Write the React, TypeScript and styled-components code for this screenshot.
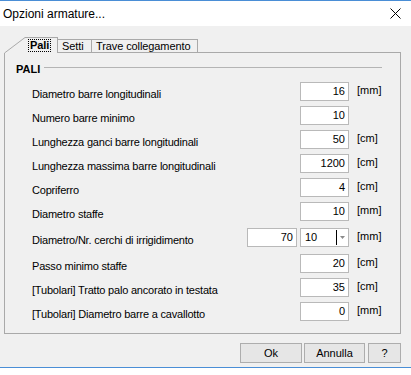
import React from 'react'
import styled, { createGlobalStyle } from 'styled-components'

const GlobalStyle = createGlobalStyle`
  html, body {
    margin: 0;
    padding: 0;
    background: #ffffff;
  }
  body {
    font-family: "Liberation Sans", Arial, sans-serif;
    font-size: 11px;
    color: #000;
  }
`

const Window = styled.div`
  width: 411px;
  display: flex;
  flex-direction: column;
  border-top: 1px solid #4a8ed6;
  border-bottom: 1px solid #4a8ed6;
  background: #f0f0f0;
`

const TitleBar = styled.div`
  height: 25px;
  display: flex;
  align-items: center;
  justify-content: space-between;
  padding: 0 10px 0 3px;
  background: #ffffff;
`

const Title = styled.span`
  font-size: 12px;
`

const Body = styled.div`
  display: flex;
  flex-direction: column;
  padding: 11px 10px 4px 4px;
`

const TabStrip = styled.div`
  display: flex;
  align-items: flex-end;
  height: 16px;
`

const Tab = styled.div<{ $active?: boolean; $w: number }>`
  box-sizing: border-box;
  width: ${p => p.$w}px;
  height: ${p => (p.$active ? 16 : 14)}px;
  display: flex;
  align-items: center;
  padding-left: ${p => (p.$active ? 3 : 4)}px;
  border-top: 1px solid #a9a9a9;
  border-right: 1px solid #a9a9a9;
  border-bottom: ${p => (p.$active ? 'none' : '1px solid #a9a9a9')};
  letter-spacing: -0.1px;
`

const Focus = styled.span`
  font-weight: bold;
  border: 1px dotted #000;
  padding: 0 1px;
  line-height: 11px;
`

const TabFiller = styled.div`
  flex: 1;
  border-bottom: 1px solid #a9a9a9;
`

const Panel = styled.div`
  box-sizing: border-box;
  height: 281px;
  display: flex;
  flex-direction: column;
  padding: 9px 18px 0 11px;
  border: 1px solid #a9a9a9;
  border-top: none;
`

const GroupHeader = styled.div`
  display: flex;
  align-items: center;
  gap: 4px;
  height: 13px;
  margin-bottom: 4px;
  font-weight: bold;
`

const GroupLine = styled.div`
  flex: 1;
  height: 1px;
  margin-top: -2px;
  background: #b4b4b4;
`

const Rows = styled.div`
  display: flex;
  flex-direction: column;
  padding-left: 16px;
`

const Row = styled.div<{ $tall?: boolean }>`
  display: flex;
  align-items: center;
  height: ${p => (p.$tall ? 28 : 24)}px;
`

const Label = styled.span`
  flex: 1;
  padding-top: 6px;
  letter-spacing: -0.2px;
  white-space: nowrap;
`

const Field = styled.div<{ $w: number }>`
  box-sizing: border-box;
  width: ${p => p.$w}px;
  height: 19px;
  margin-left: 3px;
  display: flex;
  align-items: center;
  justify-content: flex-end;
  padding-right: 3px;
  background: #ffffff;
  border: 1px solid #b9b9b9;
`

const Combo = styled.div`
  box-sizing: border-box;
  width: 49px;
  height: 19px;
  margin-left: 3px;
  display: flex;
  align-items: center;
  background: #ffffff;
  border: 1px solid #b9b9b9;
`

const ComboText = styled.span`
  flex: 1;
  padding-left: 4px;
`

const Caret = styled.span`
  width: 1px;
  height: 15px;
  background: #000;
`

const ComboButton = styled.span`
  width: 11px;
  display: flex;
  justify-content: center;
`

const Unit = styled.span`
  width: 25px;
  margin-left: 8px;
  padding-bottom: 3px;
  white-space: nowrap;
`

const Footer = styled.div`
  display: flex;
  justify-content: flex-end;
  margin-top: 9px;
`

const Button = styled.button<{ $w: number; $gap: number }>`
  box-sizing: border-box;
  width: ${p => p.$w}px;
  height: 20px;
  margin-left: ${p => p.$gap}px;
  padding: 0;
  font-family: "Liberation Sans", Arial, sans-serif;
  font-size: 11px;
  color: #000;
  background: #e6e6e6;
  border: 1px solid #adadad;
  border-radius: 0;
`

type Item = { label: string; value: string; unit?: string }

const ROWS_TOP: Item[] = [
  { label: 'Diametro barre longitudinali', value: '16', unit: '[mm]' },
  { label: 'Numero barre minimo', value: '10' },
  { label: 'Lunghezza ganci barre longitudinali', value: '50', unit: '[cm]' },
  { label: 'Lunghezza massima barre longitudinali', value: '1200', unit: '[cm]' },
  { label: 'Copriferro', value: '4', unit: '[cm]' },
  { label: 'Diametro staffe', value: '10', unit: '[mm]' },
]

const ROWS_BOTTOM: Item[] = [
  { label: 'Passo minimo staffe', value: '20', unit: '[cm]' },
  { label: '[Tubolari] Tratto palo ancorato in testata', value: '35', unit: '[cm]' },
  { label: '[Tubolari] Diametro barre a cavallotto', value: '0', unit: '[mm]' },
]

function InputRow({ label, value, unit }: Item) {
  return (
    <Row>
      <Label>{label}</Label>
      <Field $w={49}>{value}</Field>
      <Unit>{unit}</Unit>
    </Row>
  )
}

function App() {
  return (
    <>
      <GlobalStyle />
      <Window>
        <TitleBar>
          <Title>Opzioni armature...</Title>
          <svg width="11" height="11" viewBox="0 0 11 11">
            <path d="M0.5 0.5 L10.5 10.5 M10.5 0.5 L0.5 10.5" stroke="#000" strokeWidth="1" />
          </svg>
        </TitleBar>
        <Body>
          <TabStrip>
            <svg width="21" height="16" viewBox="0 0 21 16" style={{ display: 'block' }}>
              <path d="M0.5 16 L21 0.5" stroke="#a9a9a9" strokeWidth="1" fill="none" />
            </svg>
            <Tab $active $w={33}>
              <Focus>Pali</Focus>
            </Tab>
            <Tab $w={34}>Setti</Tab>
            <Tab $w={106}>Trave collegamento</Tab>
            <TabFiller />
          </TabStrip>
          <Panel>
            <GroupHeader>
              PALI
              <GroupLine />
            </GroupHeader>
            <Rows>
              {ROWS_TOP.map(r => (
                <InputRow key={r.label} {...r} />
              ))}
              <Row $tall>
                <Label>Diametro/Nr. cerchi di irrigidimento</Label>
                <Field $w={50}>70</Field>
                <Combo>
                  <ComboText>10</ComboText>
                  <Caret />
                  <ComboButton>
                    <svg width="5" height="3" viewBox="0 0 5 3">
                      <path d="M0 0 L5 0 L2.5 3 Z" fill="#8a8a8a" />
                    </svg>
                  </ComboButton>
                </Combo>
                <Unit>[mm]</Unit>
              </Row>
              {ROWS_BOTTOM.map(r => (
                <InputRow key={r.label} {...r} />
              ))}
            </Rows>
          </Panel>
          <Footer>
            <Button $w={62} $gap={0}>Ok</Button>
            <Button $w={61} $gap={2}>Annulla</Button>
            <Button $w={33} $gap={3}>?</Button>
          </Footer>
        </Body>
      </Window>
    </>
  )
}

export default App
